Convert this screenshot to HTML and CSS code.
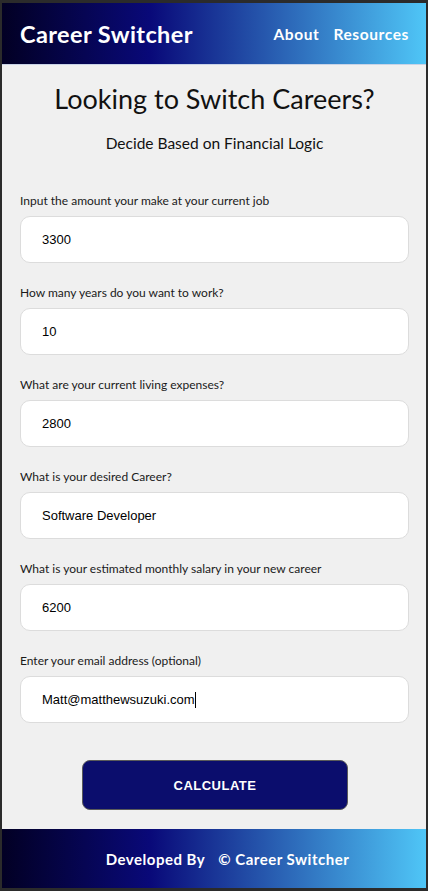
FILE: index.html
```html
<!DOCTYPE html>
<html lang="en">
<head>
<meta charset="utf-8">
<title>Career Switcher</title>
<link rel="stylesheet" href="styles.css">
</head>
<body>
<div class="page">
  <header class="topbar">
    <div class="brand">Career Switcher</div>
    <nav class="nav">
      <a href="#" class="nav-link">About</a>
      <a href="#" class="nav-link">Resources</a>
    </nav>
  </header>
  <main class="main">
    <h1 class="title">Looking to Switch Careers?</h1>
    <p class="subtitle">Decide Based on Financial Logic</p>
    <form class="form">
      <div class="field">
        <label class="label">Input the amount your make at your current job</label>
        <input class="input" type="text" value="3300">
      </div>
      <div class="field">
        <label class="label">How many years do you want to work?</label>
        <input class="input" type="text" value="10">
      </div>
      <div class="field">
        <label class="label">What are your current living expenses?</label>
        <input class="input" type="text" value="2800">
      </div>
      <div class="field">
        <label class="label">What is your desired Career?</label>
        <input class="input" type="text" value="Software Developer">
      </div>
      <div class="field">
        <label class="label">What is your estimated monthly salary in your new career</label>
        <input class="input" type="text" value="6200">
      </div>
      <div class="field">
        <label class="label">Enter your email address (optional)</label>
        <div class="input input-focus">Matt@matthewsuzuki.com<span class="caret"></span></div>
      </div>
      <div class="actions">
        <button type="button" class="btn">CALCULATE</button>
      </div>
    </form>
  </main>
  <footer class="footer">
    <span class="foot-item">Developed By</span>
    <span class="foot-item">© Career Switcher</span>
  </footer>
</div>
</body>
</html>
```
FILE: styles.css
```css
* { box-sizing: border-box; }
html, body { margin: 0; padding: 0; }
body {
  background: #2b2b2b;
  padding: 3px 2px;
  font-family: Lato, "Noto Sans", sans-serif;
}
.page {
  display: flex;
  flex-direction: column;
  height: 885px;
  background: #f0f0f0;
}
.topbar {
  height: 62px;
  flex: none;
  display: flex;
  align-items: center;
  justify-content: space-between;
  padding: 0 17px 0 18px;
  background: linear-gradient(90deg, #020024 0%, #090979 35%, #4fc6f7 100%);
  border-bottom: 1px solid #c9d3e6;
  color: #fff;
}
.brand {
  font-size: 23.5px;
  font-weight: 700;
  letter-spacing: 0.4px;
}
.nav { display: flex; gap: 14px; }
.nav-link {
  color: #fff;
  text-decoration: none;
  font-size: 15.5px;
  font-weight: 700;
  letter-spacing: 0.6px;
}
.main {
  flex: 1;
  padding: 18px 17px 0 18px;
  display: flex;
  flex-direction: column;
}
.title {
  margin: 0;
  text-align: center;
  font-size: 27px;
  line-height: 32px;
  font-weight: 400;
  color: #111;
}
.subtitle {
  margin: 18px 0 0;
  text-align: center;
  font-size: 15.5px;
  line-height: 20px;
  color: #111;
}
.form {
  margin-top: 40px;
  display: flex;
  flex-direction: column;
  gap: 22px;
}
.field { display: flex; flex-direction: column; gap: 7px; }
.label {
  font-size: 12px;
  line-height: 16px;
  color: #1a1a1a;
}
.input {
  display: flex;
  align-items: center;
  height: 47px;
  width: 100%;
  border: 1px solid #dcdcdc;
  border-radius: 10px;
  background: #fff;
  padding: 0 21px;
  font-family: "Liberation Sans", Arial, sans-serif;
  font-size: 13px;
  color: #000;
  outline: none;
}
.caret {
  display: inline-block;
  width: 1px;
  height: 16px;
  background: #000;
}
.actions {
  display: flex;
  justify-content: center;
  margin-top: 15px;
}
.btn {
  width: 266px;
  height: 50px;
  margin-left: 1px;
  background: #0b0d6d;
  border: 1px solid #5a5a5a;
  border-radius: 8px;
  color: #fff;
  font-family: "Liberation Sans", Arial, sans-serif;
  font-size: 13px;
  font-weight: 700;
  letter-spacing: 0.5px;
}
.footer {
  height: 59px;
  flex: none;
  display: flex;
  align-items: center;
  justify-content: center;
  gap: 13px;
  padding-left: 27px;
  background: linear-gradient(90deg, #020024 0%, #090979 35%, #4fc6f7 100%);
  color: #fff;
  font-size: 15px;
  font-weight: 700;
  letter-spacing: 0.5px;
}
```
